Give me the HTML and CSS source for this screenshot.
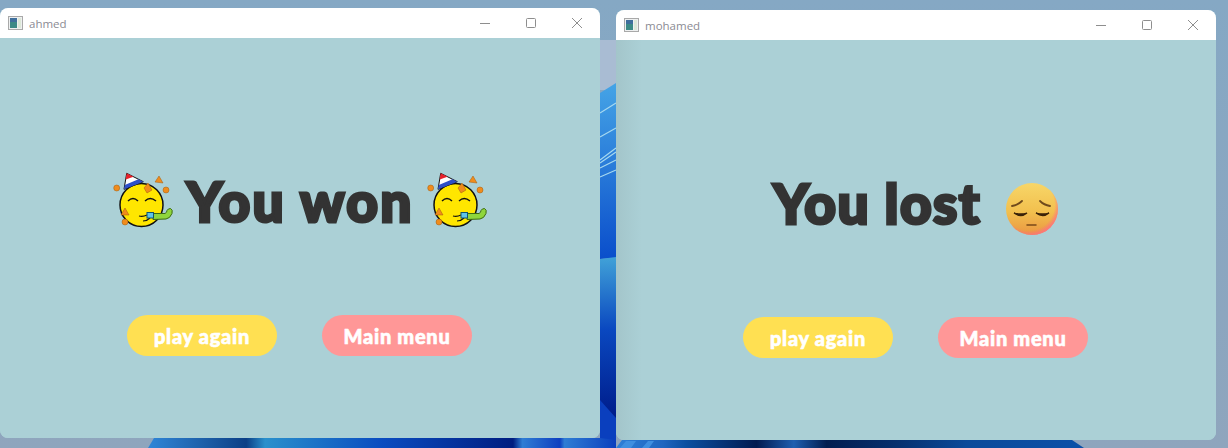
FILE: index.html
```html
<!DOCTYPE html>
<html lang="en">
<head>
<meta charset="utf-8">
<title>Game over</title>
<link rel="stylesheet" href="styles.css">
</head>
<body>
<svg width="0" height="0" class="defs">
  <defs>
    <linearGradient id="g1" x1="0" y1="0" x2="0" y2="1"><stop offset="0" stop-color="#45a4e6"/><stop offset="1" stop-color="#0a4ecb"/></linearGradient>
    <linearGradient id="g2" x1="0" y1="0" x2="0" y2="1"><stop offset="0" stop-color="#41a2d8"/><stop offset=".4" stop-color="#0a48c0"/><stop offset=".85" stop-color="#001f8e"/><stop offset="1" stop-color="#00186e"/></linearGradient>
    <linearGradient id="g3" x1="0" y1="0" x2="1" y2="0"><stop offset="0" stop-color="#2f86d8"/><stop offset=".12" stop-color="#1d5fa8"/><stop offset=".21" stop-color="#0b3f86"/><stop offset=".25" stop-color="#2a90cc"/><stop offset=".5" stop-color="#0a4cc0"/><stop offset=".78" stop-color="#001d80"/><stop offset=".8" stop-color="#2f7dd4"/><stop offset=".88" stop-color="#0e3fc0"/><stop offset=".89" stop-color="#2f7dd4"/><stop offset="1" stop-color="#0a3fbe"/></linearGradient>
    <linearGradient id="g4" x1="0" y1="0" x2="1" y2="0"><stop offset="0" stop-color="#2f80d8"/><stop offset=".1" stop-color="#1f66c0"/><stop offset=".15" stop-color="#0b4fa0"/><stop offset=".3" stop-color="#011a50"/><stop offset=".38" stop-color="#1e5fb0"/><stop offset=".45" stop-color="#021d50"/><stop offset=".6" stop-color="#06306e"/><stop offset=".75" stop-color="#0a4a9a"/><stop offset="1" stop-color="#0a50a8"/></linearGradient>
    <linearGradient id="sky" x1="0" y1="0" x2="0" y2="1"><stop offset="0" stop-color="#85a8c4"/><stop offset="1" stop-color="#8fa5bd"/></linearGradient>
    <linearGradient id="sad" x1="0" y1="0" x2="0" y2="1"><stop offset="0" stop-color="#f7d668"/><stop offset=".55" stop-color="#f2c04e"/><stop offset="1" stop-color="#ea9642"/></linearGradient>
    <radialGradient id="sadEdge" cx=".44" cy=".42" r=".6"><stop offset=".82" stop-color="#ff6f7a" stop-opacity="0"/><stop offset="1" stop-color="#ff6f86" stop-opacity=".95"/></radialGradient>
    <symbol id="party" viewBox="0 0 66 66">
      <circle cx="31.500" cy="40" r="21.500" fill="#ffe600" stroke="#111" stroke-width="1.500"/>
      <path d="M16.700 8.300 14 24.300 33.300 16.700Z" fill="#fff" stroke="#111" stroke-width="1"/>
      <path d="M16.700 8.300 15.700 14.500 23.500 11.800Z" fill="#e8202a"/>
      <path d="M14.800 20 14 24.300 33.300 16.700 28.500 14.300Z" fill="#2d4fc8"/>
      <path d="M18 36q5-5 10 0M35 36q5-5 11 0" fill="none" stroke="#111" stroke-width="1.400"/>
      <path d="M29 51q4 1 8-1M33 56q4 0 7-3" fill="none" stroke="#111" stroke-width="1.200"/>
      <path d="M43 48.500H55q2-1 2-3 1-2 3.500-2 2.500 1 1.500 5-2 5-6 5.500l-13 .5Z" fill="#8fd63c" stroke="#3c6a12" stroke-width="1"/>
      <rect x="37" y="47.500" width="6.500" height="5.500" fill="#5ec4ea" stroke="#10556e" stroke-width="1"/>
      <g fill="#f08c1c" stroke="#a35a0c" stroke-width=".5">
        <circle cx="6.700" cy="23" r="3"/><circle cx="15" cy="57" r="3"/><circle cx="56" cy="25" r="3"/>
        <path d="M49 11 53 18 45 17Z"/><path d="M38 18 42 25 37 28 34 23Z"/><path d="M15 43 19 50 11 50Z"/>
      </g>
    </symbol>
  </defs>
</svg>

<svg class="wallpaper" width="1228" height="448" viewBox="0 0 1228 448">
  <rect width="1228" height="448" fill="url(#sky)"/>
  <rect x="600" y="40" width="16" height="50" fill="#a9bcd3"/>
  <path d="M600 93 616 83V258L600 259Z" fill="url(#g1)"/>
  <path d="M600 113 616 103M600 137 616 128M600 160 616 148M600 163 616 152M600 168 616 160M600 177 616 170" stroke="#a5d8f0" stroke-width="1.200"/>
  <path d="M600 259 616 257V438H600Z" fill="url(#g2)"/>
  <path d="M600 400 616 418V440H600Z" fill="#0a3fbe"/>
  <path d="M148 448 154 438H600L616 440V448Z" fill="url(#g3)"/>
  <path d="M616 448 622 440H1072L1084 448Z" fill="url(#g4)"/>
  <path d="M620 448 626 441H636L631 448ZM642 448 648 441H654L649 448Z" fill="#3f8fe0"/>
</svg>

<main class="window window-one">
  <header class="titlebar">
    <svg class="app-icon" viewBox="0 0 15 14"><rect x=".5" y=".5" width="14" height="13" fill="#eef0f0" stroke="#a9a9a9"/><rect x="2" y="2" width="7" height="10" fill="#3c8a86"/><rect x="2" y="2" width="7" height="4" fill="#3f6f9c"/><rect x="10" y="2" width="3" height="10" fill="#dce8d8"/></svg>
    <span class="window-name">ahmed</span>
    <div class="controls">
      <span class="control"><svg viewBox="0 0 10 10"><path d="M0 5.500H10"/></svg></span>
      <span class="control"><svg viewBox="0 0 10 10"><rect x=".5" y=".5" width="9" height="9" rx="1"/></svg></span>
      <span class="control"><svg viewBox="0 0 10 10"><path d="M0 0 10 10M10 0 0 10"/></svg></span>
    </div>
  </header>
  <section class="content">
    <div class="result">
      <svg class="emoji-party"><use href="#party"/></svg>
      <h1 class="headline">You won</h1>
      <svg class="emoji-party"><use href="#party"/></svg>
    </div>
    <div class="actions">
      <button class="pill pill-yellow">play again</button>
      <button class="pill pill-pink">Main menu</button>
    </div>
  </section>
</main>

<main class="window window-two">
  <header class="titlebar">
    <svg class="app-icon" viewBox="0 0 15 14"><rect x=".5" y=".5" width="14" height="13" fill="#eef0f0" stroke="#a9a9a9"/><rect x="2" y="2" width="7" height="10" fill="#3c8a86"/><rect x="2" y="2" width="7" height="4" fill="#3f6f9c"/><rect x="10" y="2" width="3" height="10" fill="#dce8d8"/></svg>
    <span class="window-name">mohamed</span>
    <div class="controls">
      <span class="control"><svg viewBox="0 0 10 10"><path d="M0 5.500H10"/></svg></span>
      <span class="control"><svg viewBox="0 0 10 10"><rect x=".5" y=".5" width="9" height="9" rx="1"/></svg></span>
      <span class="control"><svg viewBox="0 0 10 10"><path d="M0 0 10 10M10 0 0 10"/></svg></span>
    </div>
  </header>
  <section class="content content-shaded">
    <div class="result result-lost">
      <h1 class="headline headline-lost">You lost</h1>
      <svg class="emoji-sad" viewBox="0 0 54 54">
        <circle cx="27" cy="27" r="26" fill="url(#sad)"/>
        <circle cx="27" cy="27" r="26" fill="url(#sadEdge)"/>
        <path d="M7 24q6-1 10-5" fill="none" stroke="#6f4a1c" stroke-width="1.800" stroke-linecap="round"/>
        <path d="M35 19q4 4 10 5" fill="none" stroke="#6f4a1c" stroke-width="1.800" stroke-linecap="round"/>
        <path d="M9 31q7 5 13 0-6 2-13 0Z" fill="#3a2208" stroke="#3a2208" stroke-width="1.300"/>
        <path d="M31 31q7 5 13 0-6 2-13 0Z" fill="#3a2208" stroke="#3a2208" stroke-width="1.300"/>
        <path d="M22 43H31" stroke="#7a4a1a" stroke-width="1.500" stroke-linecap="round"/>
      </svg>
    </div>
    <div class="actions">
      <button class="pill pill-yellow">play again</button>
      <button class="pill pill-pink">Main menu</button>
    </div>
  </section>
</main>
</body>
</html>
```
FILE: styles.css
```css
* { box-sizing: border-box; }
html, body { margin: 0; padding: 0; }
body {
  position: relative;
  width: 1228px;
  height: 448px;
  overflow: hidden;
  background: #87a8c4;
}
.defs { position: absolute; }
.wallpaper { position: absolute; left: 0; top: 0; display: block; }

.window {
  position: absolute;
  width: 600px;
  height: 430px;
  display: flex;
  flex-direction: column;
  border-radius: 8px;
  overflow: hidden;
  background: #abd0d6;
}
.window-one { left: 0; top: 8px; }
.window-two { left: 616px; top: 10px; }

.titlebar {
  height: 30px;
  flex: none;
  display: flex;
  align-items: center;
  padding-left: 8px;
  background: #fff;
}
.app-icon { width: 15px; height: 14px; display: block; flex: none; }
.window-name {
  margin-left: 6px;
  font: 11.5px "Open Sans", "Noto Sans", sans-serif;
  color: #8b8b93;
}
.controls { margin-left: auto; display: flex; }
.control {
  width: 46px;
  height: 30px;
  display: flex;
  align-items: center;
  justify-content: center;
}
.control svg {
  width: 10px;
  height: 10px;
  display: block;
  fill: none;
  stroke: #8e8e8e;
  stroke-width: 1;
  overflow: visible;
}

.content {
  flex: 1;
  display: flex;
  flex-direction: column;
  align-items: center;
  padding-top: 127px;
  background: #abd0d6;
}
.content-shaded {
  background: linear-gradient(90deg, #a3c5ca 0, #abd0d6 26px);
}
.result {
  height: 72px;
  display: flex;
  align-items: flex-start;
  justify-content: center;
  gap: 10px;
}
.result-lost { gap: 24px; }
.headline {
  margin: 0;
  font: 900 55px/72px Lato, "Open Sans", sans-serif;
  letter-spacing: 2.2px;
  -webkit-text-stroke: 3px #333333;
  color: #333333;
  white-space: nowrap;
}
.headline-lost { letter-spacing: 1.4px; }
.emoji-party { width: 66px; height: 66px; display: block; flex: none; }
.emoji-sad { width: 54px; height: 54px; display: block; flex: none; margin-top: 15px; }

.actions {
  margin-top: 78px;
  padding-right: 1px;
  display: flex;
  gap: 45px;
}
.pill {
  width: 150px;
  height: 41px;
  padding: 0;
  border: 0;
  border-radius: 21px;
  font: 900 20px Lato, "Open Sans", sans-serif;
  letter-spacing: .7px;
  -webkit-text-stroke: .6px #fff;
  color: #fff;
}
.pill-yellow { background: #ffe052; }
.pill-pink { background: #ff9797; }
```
